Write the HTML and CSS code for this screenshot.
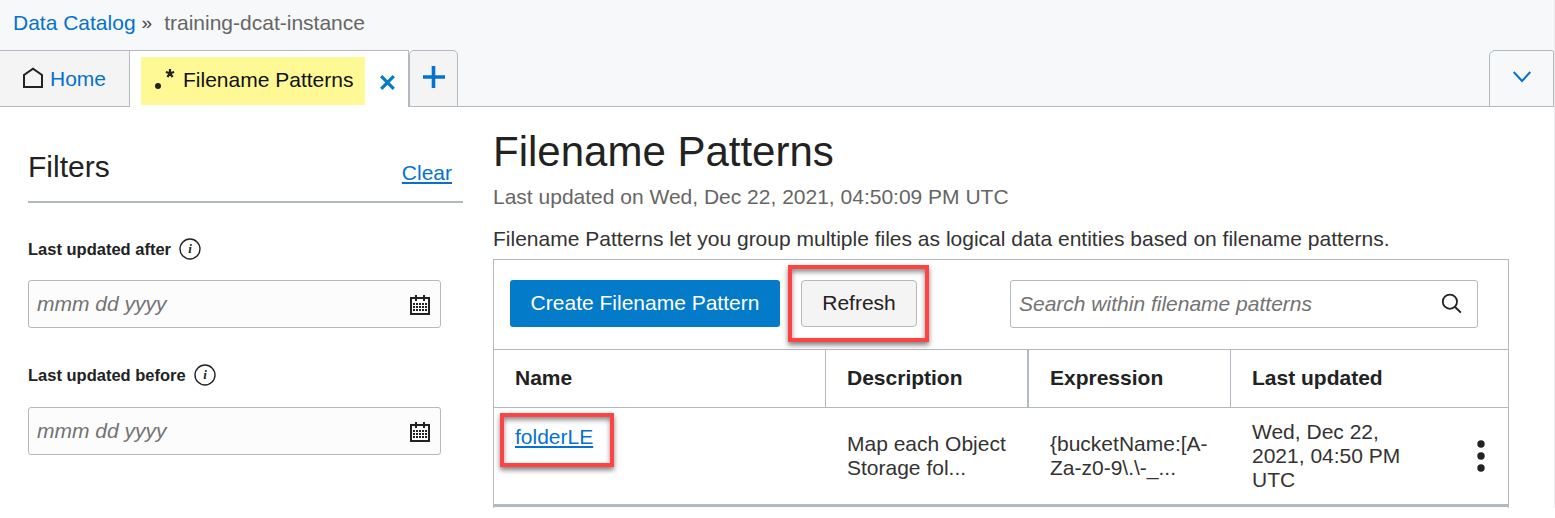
FILE: index.html
```
<!DOCTYPE html>
<html lang="en">
<head>
<meta charset="utf-8">
<title>Filename Patterns</title>
<link rel="stylesheet" href="styles.css">
</head>
<body>
<div class="page">
  <header class="crumbs"><a class="link">Data Catalog</a><span class="sep">»</span><span class="current">training-dcat-instance</span></header>
  <nav class="tabs">
    <div class="tab home">
      <svg class="home-icon" width="22" height="22" viewBox="0 0 22 22"><path d="M2 20V8L11 1.8L20 8V20Z" fill="none" stroke="#222" stroke-width="2"/></svg>
      <span>Home</span>
    </div>
    <div class="tab active">
      <div class="mark">
        <svg width="20" height="22" viewBox="0 0 20 22"><circle cx="3" cy="18" r="3" fill="#222"/><path d="M15 1V5.4M10.9 4L15 5.4L19.1 4M12.4 9L15 5.4L17.6 9" fill="none" stroke="#222" stroke-width="2.2"/></svg>
        <span>Filename Patterns</span>
      </div>
      <svg class="close" width="15" height="15" viewBox="0 0 15 15"><path d="M1.2 1.2L13.8 13.8M13.8 1.2L1.2 13.8" stroke="#047bc8" stroke-width="3.2"/></svg>
    </div>
    <div class="tab add"><svg width="22" height="22" viewBox="0 0 22 22"><path d="M10.5 0V22M0 11H22" stroke="#0572ce" stroke-width="3.6"/></svg></div>
    <div class="tab more"><svg width="18" height="12" viewBox="0 0 18 12"><path d="M.7 1L9 10L17.3 1" fill="none" stroke="#0572ce" stroke-width="2"/></svg></div>
  </nav>
  <div class="content">
    <aside class="filters">
      <div class="filters-head"><h2>Filters</h2><a class="link under">Clear</a></div>
      <div class="label"><span>Last updated after</span><svg width="22" height="22" viewBox="0 0 22 22"><circle cx="11" cy="11" r="10" fill="none" stroke="#222" stroke-width="1.4"/><text x="11" y="15.2" text-anchor="middle" class="info">i</text></svg></div>
      <div class="date"><span>mmm dd yyyy</span>
        <svg width="20" height="20" viewBox="0 0 20 20"><path d="M1 3H19V19H1Z" fill="none" stroke="#222" stroke-width="2"/><path d="M6 0V6M14 0V6" stroke="#222" stroke-width="2"/><path d="M3 9H17M3 12H17M3 15H17" stroke="#222" stroke-width="2" stroke-dasharray="2 1"/></svg></div>
      <div class="label second"><span>Last updated before</span><svg width="22" height="22" viewBox="0 0 22 22"><circle cx="11" cy="11" r="10" fill="none" stroke="#222" stroke-width="1.4"/><text x="11" y="15.2" text-anchor="middle" class="info">i</text></svg></div>
      <div class="date"><span>mmm dd yyyy</span>
        <svg width="20" height="20" viewBox="0 0 20 20"><path d="M1 3H19V19H1Z" fill="none" stroke="#222" stroke-width="2"/><path d="M6 0V6M14 0V6" stroke="#222" stroke-width="2"/><path d="M3 9H17M3 12H17M3 15H17" stroke="#222" stroke-width="2" stroke-dasharray="2 1"/></svg></div>
    </aside>
    <main class="main">
      <h1>Filename Patterns</h1>
      <p class="updated">Last updated on Wed, Dec 22, 2021, 04:50:09 PM UTC</p>
      <p class="intro">Filename Patterns let you group multiple files as logical data entities based on filename patterns.</p>
      <section class="panel">
        <div class="toolbar">
          <div class="btn primary">Create Filename Pattern</div>
          <div class="btn plain">Refresh<i class="callout callout-refresh"></i></div>
          <div class="search"><span>Search within filename patterns</span>
            <svg width="22" height="22" viewBox="0 0 22 22"><circle cx="8.9" cy="8.7" r="7.1" fill="none" stroke="#222" stroke-width="1.8"/><path d="M13.8 13.8L19.9 19.6" stroke="#222" stroke-width="2"/></svg></div>
        </div>
        <div class="row head"><div>Name</div><div>Description</div><div>Expression</div><div>Last updated</div></div>
        <div class="row data">
          <div class="name"><a class="link under">folderLE</a><i class="callout callout-name"></i></div>
          <div>Map each Object<br>Storage fol...</div>
          <div>{bucketName:[A-<br>Za-z0-9\.\-_...</div>
          <div class="when"><span>Wed, Dec 22,<br>2021, 04:50 PM<br>UTC</span>
            <svg width="8" height="32" viewBox="0 0 8 32"><g fill="#222"><circle cx="4" cy="4" r="3.7"/><circle cx="4" cy="16" r="3.7"/><circle cx="4" cy="28" r="3.7"/></g></svg></div>
        </div>
      </section>
    </main>
  </div>
</div>
</body>
</html>
```
FILE: styles.css
```
* { box-sizing: border-box; }
body { margin: 0; background: #fff; color: #222; font: 21px/24px "Liberation Sans", Arial, sans-serif; overflow: hidden; }
.page { width: 1555px; height: 518px; white-space: nowrap; }
.link { color: #0572ce; }
.under { text-decoration: underline; text-decoration-thickness: 2px; text-underline-offset: 2px; }
h1, h2, p { margin: 0; font-weight: normal; }
svg { display: block; flex: none; }

.crumbs { height: 50px; padding: 11px 0 0 13px; display: flex; background: #f6f8fa; border-right: 1px solid #ebebee; }
.sep { margin: 0 12px 0 6px; color: #444; font-size: 19px; }
.current { color: #666; }

.tabs { display: flex; height: 57px; background: linear-gradient(#b2b9c1, #b2b9c1) 0 100% / 1554px 1px no-repeat #f6f8fa; border-right: 1px solid #ebebee; }
.tab { display: flex; border: 1px solid #b2b9c1; }
.home { width: 130px; border-left: 0; padding: 16px 0 0 22px; color: #0572ce; background: #f4f4f4; gap: 6px; }
.active { width: 279px; border-left: 0; border-bottom: 0; background: #fff; padding: 6px 0 0 11px; color: #111; }
.mark { width: 224px; height: 48px; background: #fff995; display: flex; padding: 11px 0 0 14px; gap: 8px; }
.close { margin: 18px 0 0 15px; }
.add { width: 49px; border-radius: 5px 5px 0 0; background: #f4f4f4; padding: 15px 0 0 13px; }
.more { width: 65px; margin-left: auto; border-radius: 6px 2px 0 0; padding: 20px 0 0 23px; }

.content { display: flex; height: 411px; }
.filters { width: 493px; padding-left: 28px; }
.filters-head { width: 435px; height: 96px; border-bottom: 2px solid #b2b9c1; display: flex; justify-content: space-between; padding: 48px 11px 0 0; }
.filters-head h2 { font-size: 30px; }
.filters-head .link { padding-top: 6px; }
.label { display: flex; font-size: 16.5px; font-weight: bold; gap: 8px; padding-top: 34px; height: 77px; }
.label svg { margin-top: 1px; }
.label.second { height: 79px; padding-top: 35px; }
.info { font: italic bold 13px "Liberation Serif", serif; fill: #222; }
.date { width: 413px; height: 48px; border: 1px solid #b2b9c1; border-radius: 3px; background: #fcfcfc; color: #737373; font-style: italic; display: flex; justify-content: space-between; padding: 11px 10px 0 8px; }
.date svg { margin-top: 3px; }

.main { width: 1062px; height: 401px; border-right: 1px solid #ebebee; }
h1 { font-size: 42px; line-height: 48px; padding-top: 21px; }
.updated { padding-top: 9px; color: #666; }
.intro { padding-top: 18px; color: #333; height: 50px; }
.panel { width: 1016px; height: 249px; border: 1px solid #b2b9c1; border-bottom: 0; }
.toolbar { display: flex; height: 89px; padding: 20px 0 0 16px; }
.btn { height: 47px; line-height: 45px; text-align: center; border-radius: 3px; }
.primary { width: 270px; background: #047bc8; color: #fff; }
.plain { position: relative; width: 116px; margin-left: 21px; border: 1px solid #b2b9c1; border-radius: 4px; background: #f4f4f4; line-height: 43px; }
.search { width: 468px; height: 48px; margin-left: 93px; border: 1px solid #b2b9c1; border-radius: 3px; display: flex; justify-content: space-between; padding: 11px 14px 0 8px; font-style: italic; color: #737373; }
.search svg { margin-top: 1px; }
.callout { position: absolute; border: 4px solid #ff4343; box-shadow: 0 3px 5px rgba(0,0,0,.5), inset 0 3px 5px rgba(0,0,0,.45); }
.callout-refresh { left: -14px; top: -16px; width: 141px; height: 77px; }
.callout-name { left: 6px; top: 5px; width: 114px; height: 54px; }
.row { display: grid; grid-template-columns: 332px 203px 202px 277px; border-top: 1px solid #b2b9c1; color: #333; }
.head { height: 58px; font-weight: bold; color: #222; }
.head > div { padding: 16px 0 0 21px; border-right: 1px solid #b2b9c1; }
.head > div:nth-child(2) { border-right-width: 2px; }
.head > div:last-child { border-right: 0; }
.data { height: 100px; border-bottom: 3px solid #b2b9c1; }
.data > div { padding: 24px 0 0 21px; }
.data .name { position: relative; padding: 17px 0 0 21px; }
.data .when { display: flex; justify-content: space-between; padding: 12px 23px 0 21px; }
.when svg { margin-top: 20px; }
```
